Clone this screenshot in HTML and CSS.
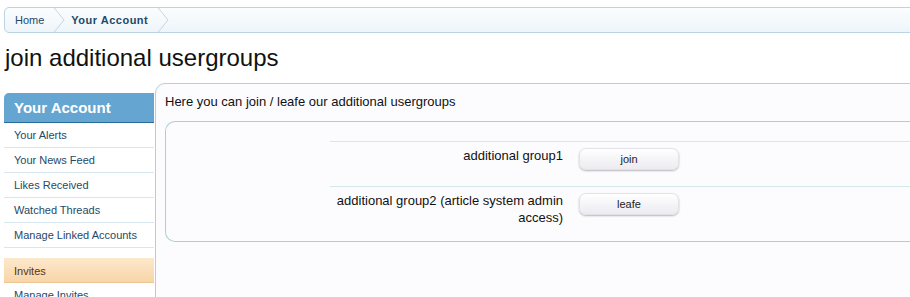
FILE: index.html
```html
<!DOCTYPE html>
<html>
<head>
<meta charset="utf-8">
<link rel="stylesheet" href="styles.css">
</head>
<body>
<div class="page">
  <nav class="breadcrumb">
    <a class="crumb">Home</a>
    <svg class="sep" width="12" height="26" viewBox="0 0 12 26"><polyline points="0.5,0 11,13 0.5,26" fill="none" stroke="#c3d6e3" stroke-width="1"/></svg>
    <a class="crumb current">Your Account</a>
    <svg class="sep" width="12" height="26" viewBox="0 0 12 26"><polyline points="0.5,0 11,13 0.5,26" fill="none" stroke="#c3d6e3" stroke-width="1"/></svg>
  </nav>
  <h1 class="title">join additional usergroups</h1>
  <div class="main">
    <aside class="sidebar">
      <h3 class="side-head">Your Account</h3>
      <ul class="side-list">
        <li>Your Alerts</li>
        <li>Your News Feed</li>
        <li>Likes Received</li>
        <li>Watched Threads</li>
        <li>Manage Linked Accounts</li>
      </ul>
      <h4 class="side-sub">Invites</h4>
      <ul class="side-list">
        <li>Manage Invites</li>
      </ul>
    </aside>
    <section class="content">
      <p class="intro">Here you can join / leafe our additional usergroups</p>
      <div class="form">
        <div class="row">
          <div class="label">additional group1</div>
          <div class="ctrl"><button class="btn">join</button></div>
        </div>
        <div class="row">
          <div class="label">additional group2 (article system admin access)</div>
          <div class="ctrl"><button class="btn">leafe</button></div>
        </div>
      </div>
    </section>
  </div>
</div>
</body>
</html>
```

FILE: styles.css
```css
html, body { margin: 0; padding: 0; background: #fff; overflow: hidden; }
body { font-family: "Liberation Sans", Arial, sans-serif; color: #000; }
.page { width: 1000px; padding: 7px 0 0 4px; }

.breadcrumb {
  display: flex; align-items: center;
  height: 24px;
  border: 1px solid #bcd3e1;
  border-radius: 5px 0 0 5px;
  background: linear-gradient(to bottom, #fbfdfe, #eef5fa);
  font-size: 11px;
}
.crumb { color: #1d4a68; padding: 0 9px 0 10px; line-height: 24px; }
.crumb.current { font-weight: bold; padding: 0 9px 0 6px; color: #204a66; letter-spacing: 0.5px; }
.sep { display: block; margin-top: -1px; }

.title {
  margin: 10px 0 0 1px;
  font-size: 24px; font-weight: normal;
  line-height: 30px; color: #111;
}

.main { display: flex; align-items: flex-start; margin-top: 10px; }

.sidebar { width: 150px; margin-top: 10px; flex: none; }
.side-head {
  margin: 0; height: 29px;
  background: #65a5d1;
  border-bottom: 1px solid #2a6c99;
  border-radius: 5px 0 0 0;
  color: #fff; font-size: 15px; font-weight: bold;
  line-height: 30px; padding-left: 10px;
}
.side-list { list-style: none; margin: 0; padding: 0; }
.side-list li {
  font-size: 11px; line-height: 14px; color: #1f4966;
  padding: 5px 10px; border-bottom: 1px solid #d7e6ef;
}
.side-sub {
  margin: 10px 0 0 0; height: 24px;
  background: linear-gradient(to bottom, #fde8cc, #f8d5a8);
  border-bottom: 1px solid #eec594;
  color: #5a3410; font-size: 11px; font-weight: normal;
  line-height: 26px; padding-left: 10px;
}

.content {
  flex: 1;
  margin-left: 1px;
  border: 1px solid #b3cfdc;
  border-radius: 10px 0 0 0;
  background: #fcfcff;
  padding: 9px 10px 30px 9px;
  min-height: 200px;
}
.intro { margin: 0; font-size: 13px; line-height: 17px; color: #111; }
.form {
  margin-top: 11px;
  border: 1px solid #b0cdd6;
  border-radius: 10px 0 0 10px;
  border-right: none;
  background: #fcfcff;
  padding: 19px 0 10px 0;
}
.row {
  display: flex; margin-left: 164px;
  border-top: 1px solid #d5e8ec;
  padding: 5px 0; min-height: 34px;
}
.label {
  width: 233px; text-align: right;
  font-size: 13px; line-height: 17px; color: #111;
  padding-right: 16px;
}
.ctrl { padding-top: 1px; }
.btn {
  width: 100px; height: 22px;
  border: 1px solid #e2e2ea;
  border-radius: 7px;
  background: linear-gradient(to bottom, #ffffff, #ebebf1);
  box-shadow: 0 1px 2px rgba(0,0,0,0.28);
  font-family: "Liberation Sans", Arial, sans-serif;
  font-size: 11px; color: #222;
  padding: 0;
}
```
